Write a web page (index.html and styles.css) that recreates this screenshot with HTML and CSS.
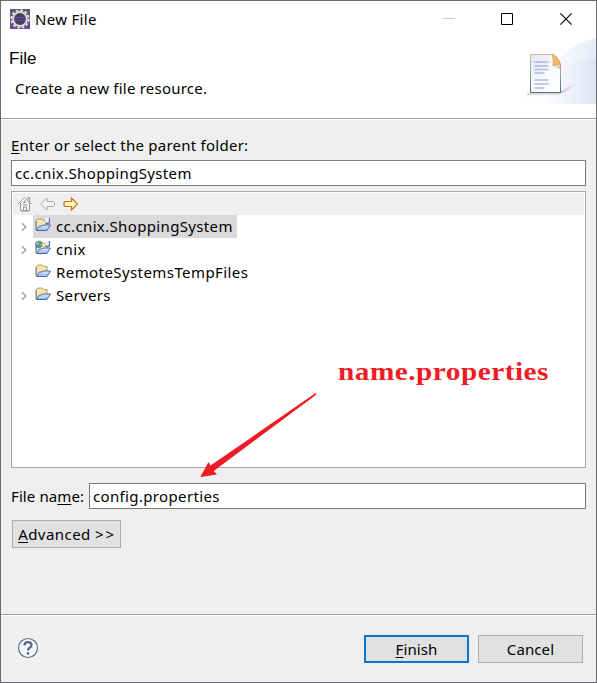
FILE: index.html
```
<!DOCTYPE html>
<html lang="en">
<head>
<meta charset="utf-8">
<title>New File</title>
<link rel="stylesheet" href="styles.css">
</head>
<body>
<svg width="0" height="0" class="defs" aria-hidden="true">
  <defs>
    <linearGradient id="paper" x2="1" y2="1"><stop stop-color="#dce7f7"/><stop offset=".5" stop-color="#f6f9fe"/><stop offset="1" stop-color="#fff"/></linearGradient>
    <linearGradient id="edge" x2="0" y2="1"><stop stop-color="#d9bd85"/><stop offset=".45" stop-color="#9cac9c"/><stop offset="1" stop-color="#4b7279"/></linearGradient>
    <linearGradient id="swoosh"><stop stop-color="#fff"/><stop offset=".35" stop-color="#fbfcff"/><stop offset="1" stop-color="#dce3f6"/></linearGradient>
    <linearGradient id="shade"><stop stop-color="#a99cac"/><stop offset="1" stop-color="#e0e3f5" stop-opacity="0"/></linearGradient>
    <linearGradient id="front" x2="0" y2="1"><stop stop-color="#e4f0ff"/><stop offset="1" stop-color="#8bb4ef"/></linearGradient>
    <linearGradient id="app" x2="0" y2="1"><stop stop-color="#62566e"/><stop offset="1" stop-color="#67479c"/></linearGradient>
    <symbol id="folder" viewBox="0 0 16 16">
      <path d="M1.500 13V3.500l1.500-1.500h4L8.500 3.500H12V8" fill="#fae6ad" stroke="#b99b61"/>
      <path d="M1 13V4" fill="none" stroke="#6683b5"/>
      <path d="M1.500 13.500 4.400 9h2.400l1-1h7.700l-3.600 5.500z" fill="url(#front)" stroke="#4568ad"/>
    </symbol>
    <symbol id="project" viewBox="0 0 16 16">
      <use href="#folder"/>
      <path d="M10.500 1h5v5.500h-5z" fill="#edf3fb"/>
      <path d="M14.500 1v3.500q0 2-2 2-1.200 0-2-1" fill="none" stroke="#5378ae" stroke-width="1.300"/>
    </symbol>
    <symbol id="chevron" viewBox="0 0 8 10"><path d="m2 1.200 3.800 3.800L2 8.800" fill="none" stroke="#a3a3a3" stroke-width="1.500"/></symbol>
  </defs>
</svg>
<main class="window">
  <header class="banner">
    <div class="titlebar">
      <svg class="app-icon" width="20" height="20" viewBox="0 0 20 20">
        <path d="M0 0h20v20H0z" fill="url(#app)"/>
        <circle cx="10" cy="10" r="8.500" fill="none" stroke="#dedbd8" stroke-width="2.400" stroke-dasharray="2.650 1.800"/>
        <circle cx="10" cy="10" r="6.900" fill="#45405f" stroke="#d7d5d3" stroke-width="2"/>
        <path d="M4.500 8.500h11M4.500 11h11" stroke="#5d588c"/>
      </svg>
      <h1 class="title">New File</h1>
      <svg class="controls" width="126" height="14" viewBox="0 0 126 14">
        <path d="M0 6.500h12" stroke="#ccc"/>
        <path d="M58.500 1.500h11v11h-11z" fill="none" stroke="#000"/>
        <path d="m117.400 1.400 11.200 11.200M128.600 1.400l-11.200 11.200" stroke="#000" stroke-width="1.100"/>
      </svg>
    </div>
    <h2 class="heading">File</h2>
    <p class="description">Create a new file resource.</p>
    <svg class="wizard-art" width="76" height="68" viewBox="0 0 76 68">
      <path d="M0 66Q38 7 76 0v66z" fill="url(#swoosh)" opacity=".72"/>
      <path d="M0 66Q37 22 76 22v44z" fill="url(#swoosh)" opacity=".8"/>
      <path d="M40 54 62 41Q51 52 40 56z" fill="url(#shade)" opacity=".65"/>
      <path d="M7 56h33" stroke="#e5dada" stroke-width="2"/>
      <path d="M10.500 16.500H32l8.500 10V54.500h-30z" fill="url(#paper)" stroke="url(#edge)"/>
      <path d="M32 16q6 2 9 11-4-1-8 1 1-7-1-12z" fill="#f3b668" stroke="#d18d3e" stroke-width=".6"/>
      <path d="M34 28q4-1 7 0v4z" fill="#a98e85" opacity=".45"/>
      <path d="M14.500 24h14M14.500 28h14M14.500 31.500h14M14.500 35h10M14.500 42h14M14.500 46h14M14.500 50h10" stroke="#b1bbd8" stroke-width="1.400"/>
    </svg>
  </header>
  <section class="content">
    <label class="parent-label"><u>E</u>nter or select the parent folder:</label>
    <div class="field">cc.cnix.ShoppingSystem</div>
    <div class="tree">
      <div class="toolbar">
        <svg width="16" height="16" viewBox="0 0 16 16" fill="none" stroke="#999"><path d="M1 8 7.500 1.500 14 8M3.500 7v7.500h9V7M11 4V1.500h1.500V6" fill="#f5f5f5"/><path d="M4 15h8M6 6.500h3M6.500 15v-4h3v4M7 5h2M5.500 9h5"/></svg>
        <svg width="16" height="16" viewBox="0 0 16 16"><path d="M.5 8 7 2v3.500h6.500l1 1v3l-1 1H7V14z" fill="#f3f3f3" stroke="#aaa"/></svg>
        <svg width="16" height="16" viewBox="0 0 16 16"><path d="M14.500 8 8.500 2v3.500H2l-1 1v3l1 1h6.500V14z" fill="#fff2bd" stroke="#bd7b16" stroke-width="1.200"/></svg>
      </div>
      <div class="row"><svg class="chevron" width="8" height="10"><use href="#chevron"/></svg><div class="node selected"><svg class="icon" width="16" height="16"><use href="#project"/></svg><span>cc.cnix.ShoppingSystem</span></div></div>
      <div class="row"><svg class="chevron" width="8" height="10"><use href="#chevron"/></svg><div class="node"><svg class="icon" width="16" height="16" viewBox="0 0 16 16"><use href="#project"/><circle cx="3.700" cy="4.500" r="3.300" fill="#4e8eac" stroke="#386586" stroke-width=".6"/><path d="M1 3.500q2-3 3-1T1 5.500zM5 4.500l2-1-1 3z" fill="#a2c878"/></svg><span>cnix</span></div></div>
      <div class="row"><span class="chevron"></span><div class="node"><svg class="icon" width="16" height="16"><use href="#folder"/></svg><span class="long-name">RemoteSystemsTempFiles</span></div></div>
      <div class="row"><svg class="chevron" width="8" height="10"><use href="#chevron"/></svg><div class="node"><svg class="icon" width="16" height="16"><use href="#folder"/></svg><span>Servers</span></div></div>
    </div>
    <div class="file-row"><label class="file-label">File na<u>m</u>e:</label><div class="field file-field">config.properties</div></div>
    <button class="button advanced"><span><u>A</u>dvanced <span class="more">&gt;&gt;</span></span></button>
  </section>
  <footer class="footer">
    <svg width="22" height="22" viewBox="0 0 22 22"><circle cx="11" cy="11" r="9.500" fill="#f6f6f6" stroke="#5b6f90" stroke-width="1.200"/><path d="M7.500 8.500Q7.500 5.200 11 5.200t3.500 3q0 1.500-1.800 2.600Q11 11.800 11 13.400" fill="none" stroke="#566b8e" stroke-width="2.200"/><circle cx="11" cy="16.400" r="1.300" fill="#566b8e"/></svg>
    <div class="actions"><button class="button primary"><span><u>F</u>inish</span></button><button class="button"><span>Cancel</span></button></div>
  </footer>
  <div class="note">name.properties</div>
  <svg class="arrow" width="120" height="88" viewBox="0 0 120 88"><path d="M115.300 1.300 10.500 73.500 8.500 70 .300 85l16.700-2.500-3.300-3.500L60 44.500 116.200 2.700Q116.700.700 115.300 1.300z" fill="#ee1c25"/></svg>
</main>
</body>
</html>
```
FILE: styles.css
```
* { box-sizing: border-box; }
body { margin: 0; font: 15px/22px "Noto Sans", "Open Sans", sans-serif; letter-spacing: .35px; color: #000; }
h1, h2, p { margin: 0; font-weight: 400; }
u { text-decoration-thickness: 1px; text-underline-offset: 2px; }
svg { display: block; flex: none; }
.defs { position: absolute; }
.window { position: relative; width: 597px; height: 683px; border: 1px solid #6b696e; background: #efefef; overflow: hidden; display: flex; flex-direction: column; }
.banner { position: relative; height: 118px; background: #fff; border-bottom: 1px solid #a0a0a0; flex: none; }
.titlebar { display: flex; align-items: center; height: 36px; padding-left: 9px; }
.title { font-size: 15px; margin-left: 5px; letter-spacing: .3px; }
.controls { margin-left: auto; margin-right: 27px; overflow: visible; }
.heading { font: 17px/22px "Liberation Sans", sans-serif; letter-spacing: 0; padding-left: 8px; margin-top: 11px; }
.description { margin-top: 7px; padding-left: 14px; letter-spacing: .22px; }
.wizard-art { position: absolute; right: 0; top: 37px; }
.content { border-top: 1px solid #fff; height: 495px; padding: 14px 10px 0; flex: none; }
.parent-label { display: block; height: 26px; letter-spacing: .25px; }
.field { height: 26px; border: 1px solid #7a7a7a; background: #fff; padding-left: 3px; line-height: 24px; }
.tree { margin-top: 5px; height: 277px; border: 1px solid #a5a5ab; background: #fff; padding: 1px; }
.toolbar { display: flex; align-items: center; gap: 7px; height: 22px; padding-left: 4px; background: #efefef; }
.row { display: flex; align-items: center; height: 23px; }
.chevron { width: 8px; margin-left: 7px; margin-right: 5px; }
.node { display: flex; align-items: center; height: 23px; padding: 0 4px 0 2px; }
.node span { margin-left: 5px; margin-top: -2px; }
.node .long-name { letter-spacing: .42px; }
.icon { margin-bottom: 3px; }
.selected { background: #d9d9d9; }
.file-row { display: flex; align-items: center; margin-top: 15px; }
.file-label { width: 78px; letter-spacing: .1px; }
.file-field { flex: 1; }
.button { display: grid; place-items: center; height: 28px; width: 105px; border: 1px solid #adadad; background: #e1e1e1; padding: 0; font: inherit; letter-spacing: .1px; color: inherit; white-space: nowrap; }
.advanced { width: 109px; margin: 11px 0 0 1px; letter-spacing: .45px; }
.more { letter-spacing: 1.8px; margin-right: -1px; }
.primary { border: 2px solid #0078d7; }
.footer { flex: 1; display: flex; align-items: center; justify-content: space-between; border-top: 1px solid #a0a0a0; box-shadow: inset 0 1px #fff; padding: 0 13px 2px 16px; }
.actions { display: flex; gap: 9px; margin-top: 2px; }
.note { position: absolute; left: 337px; top: 356px; font: bold 26px/30px "Liberation Serif", serif; letter-spacing: .45px; color: #ee1c25; white-space: nowrap; transform: scaleX(1.125); transform-origin: left; }
.arrow { position: absolute; left: 199px; top: 391px; }
```
